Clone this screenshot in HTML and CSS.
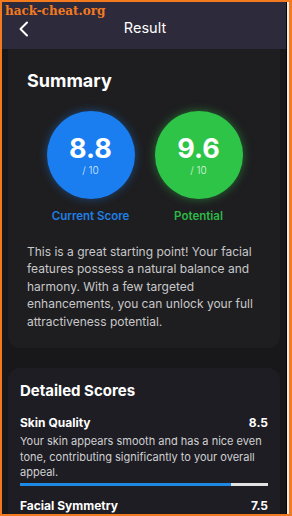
FILE: index.html
```html
<!DOCTYPE html>
<html>
<head>
<meta charset="utf-8">
<link rel="stylesheet" href="styles.css">
</head>
<body>
<div class="frame">
  <div class="bezel">
    <div class="screen">
      <header class="topbar">
        <svg class="back" width="12" height="16" viewBox="0 0 12 16"><path d="M9 1.5 L2.5 8 L9 14.5" fill="none" stroke="#fff" stroke-width="2" stroke-linecap="round" stroke-linejoin="round"/></svg>
        <div class="title">Result</div>
      </header>
      <section class="card summary">
        <h2 class="summary-title">Summary</h2>
        <div class="scores">
          <div class="score">
            <div class="circle blue"><span class="big">8.8</span><span class="outof">/ 10</span></div>
            <div class="label blue-text">Current Score</div>
          </div>
          <div class="score">
            <div class="circle green"><span class="big">9.6</span><span class="outof">/ 10</span></div>
            <div class="label green-text">Potential</div>
          </div>
        </div>
        <p class="summary-text">This is a great starting point! Your facial features possess a natural balance and harmony. With a few targeted enhancements, you can unlock your full attractiveness potential.</p>
      </section>
      <section class="card detailed">
        <h3 class="detailed-title">Detailed Scores</h3>
        <div class="row">
          <div class="row-head"><span>Skin Quality</span><span>8.5</span></div>
          <p class="row-text">Your skin appears smooth and has a nice even tone, contributing significantly to your overall appeal.</p>
          <div class="bar"><div class="fill" style="width:85%"></div></div>
        </div>
        <div class="row">
          <div class="row-head"><span>Facial Symmetry</span><span>7.5</span></div>
        </div>
      </section>
    </div>
  </div>
  <div class="watermark">hack-cheat.org</div>
</div>
</body>
</html>
```
FILE: styles.css
```css
* { box-sizing: border-box; }
html, body { margin: 0; padding: 0; }
body {
  width: 292px;
  height: 516px;
  overflow: hidden;
  background: #f47a20;
  font-family: Inter, "Noto Sans", sans-serif;
}
.frame {
  position: relative;
  width: 292px;
  height: 516px;
  padding: 2px 3px 2px 2px;
}
.bezel {
  height: 512px;
  border-right: 2px solid #ececec;
}
.screen {
  height: 512px;
  overflow: hidden;
  background: #18181a;
  border-right: 1px solid #050505;
  display: flex;
  flex-direction: column;
}
.topbar {
  flex: none;
  height: 47px;
  background: #2d2a3b;
  display: flex;
  align-items: center;
  justify-content: center;
  position: relative;
}
.back {
  position: absolute;
  left: 16px;
  top: 19px;
}
.title {
  color: #fff;
  font-size: 14.5px;
  font-weight: 400;
  margin-top: 4px;
  margin-left: 2px;
}
.card {
  margin: 0 6px;
  border-radius: 12px;
}
.summary {
  background: #1e1e20;
  border-top-left-radius: 0;
  border-top-right-radius: 0;
  padding: 20px 19px 18px 19px;
}
.summary-title {
  margin: 0;
  color: #fff;
  font-size: 18px;
  font-weight: 700;
  line-height: 24px;
}
.scores {
  display: flex;
  justify-content: center;
  gap: 20px;
  margin-top: 18px;
  margin-left: 1px;
}
.score {
  display: flex;
  flex-direction: column;
  align-items: center;
  width: 88px;
}
.circle {
  width: 88px;
  height: 88px;
  border-radius: 50%;
  display: flex;
  flex-direction: column;
  align-items: center;
  justify-content: center;
  color: #fff;
}
.circle.blue { background: #1a7ef0; box-shadow: 0 0 10px rgba(26,126,240,0.45); }
.circle.green { background: #2ec448; box-shadow: 0 0 10px rgba(46,196,72,0.5); }
.big {
  display: block;
  font-size: 27px;
  font-weight: 700;
  line-height: 30px;
}
.outof {
  display: block;
  font-size: 10px;
  line-height: 12px;
  font-weight: 300;
  color: rgba(255,255,255,0.85);
}
.label {
  margin-top: 9px;
  font-size: 11.5px;
  font-weight: 600;
  line-height: 16px;
  white-space: nowrap;
}
.blue-text { color: #1f7fe6; }
.green-text { color: #2db847; }
.summary-text {
  margin: 19px 0 0 0;
  color: #c8c8ca;
  font-size: 12px;
  line-height: 17.4px;
}
.detailed {
  margin-top: 20px;
  background: #1e1d23;
  padding: 13px 12px 0 12px;
  flex: 1;
  border-bottom-left-radius: 0;
  border-bottom-right-radius: 0;
}
.detailed-title {
  margin: 0;
  color: #fff;
  font-size: 15px;
  font-weight: 700;
  line-height: 20px;
}
.row { margin-top: 14px; }
.row + .row { margin-top: 12px; }
.row-head {
  display: flex;
  justify-content: space-between;
  color: #fff;
  font-size: 12px;
  font-weight: 700;
  line-height: 16px;
}
.row-text {
  margin: 3px 0 0 0;
  color: #d0d0d2;
  font-size: 11px;
  line-height: 15.5px;
}
.bar {
  margin-top: 2px;
  height: 3px;
  background: #e2e2e2;
}
.fill {
  height: 3px;
  background: #1e88e5;
}
.watermark {
  position: absolute;
  left: 5px;
  top: 4px;
  font-family: "DejaVu Serif", serif;
  font-weight: 700;
  font-size: 12px;
  color: #f47a20;
}
```
